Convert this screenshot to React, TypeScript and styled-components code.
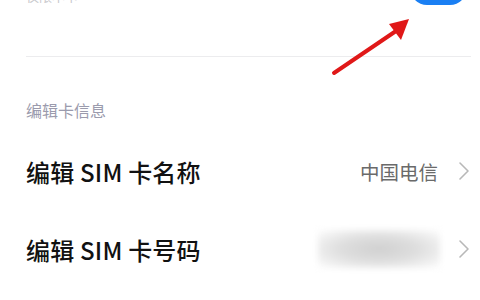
import React from "react";
import styled, { createGlobalStyle } from "styled-components";

const Global = createGlobalStyle`
  html, body { margin: 0; padding: 0; background: #ffffff; }
  body { font-family: "Noto Sans CJK SC", "Noto Sans", sans-serif; overflow: hidden; }
`;

const Page = styled.div`
  position: relative;
  width: 480px;
  height: 300px;
  overflow: hidden;
  background: #ffffff;
`;

const TopItem = styled.div`
  display: flex;
  align-items: flex-end;
  justify-content: space-between;
  margin-top: -40px;
  height: 45px;
  padding: 0 13px 0 26px;
`;

const FaintText = styled.span`
  font-size: 13px;
  line-height: 13px;
  color: #c8c8cc;
  margin-bottom: 3px;
`;

const BluePill = styled.div`
  width: 57px;
  height: 34px;
  border-radius: 17px;
  background: #1a7ff3;
`;

const Divider = styled.div`
  height: 1px;
  background: #ececee;
  margin: 51px 9px 0 26px;
`;

const SectionLabel = styled.div`
  padding: 43px 26px 12px 26px;
  font-size: 16px;
  line-height: 20px;
  color: #9b9bad;
`;

const Row = styled.div`
  display: flex;
  align-items: center;
  justify-content: space-between;
  height: 78px;
  padding: 0 10px 0 26px;
`;

const Title = styled.span`
  font-size: 24px;
  font-weight: 500;
  color: #111111;
  letter-spacing: 0.2px;
`;

const Right = styled.div`
  display: flex;
  align-items: center;
  gap: 20px;
`;

const Value = styled.span`
  font-size: 19.5px;
  color: #6a6a6a;
`;

const Blurred = styled.div`
  width: 122px;
  height: 38px;
  background: radial-gradient(ellipse at center, #d0d0d0 0%, #dedede 45%, #f2f2f2 80%, #ffffff 100%);
  filter: blur(3px);
  margin-right: -2px;
`;

const Chevron = styled.svg`
  width: 12px;
  height: 20px;
  flex: none;
`;

const Arrow = styled.svg`
  position: absolute;
  left: 0;
  top: 0;
  pointer-events: none;
`;

const ChevronIcon = () => (
  <Chevron viewBox="0 0 12 20">
    <path d="M2 2 L10 10 L2 18" fill="none" stroke="#b8b8b8" strokeWidth="1.6" strokeLinecap="round" strokeLinejoin="round" />
  </Chevron>
);

export default function App() {
  return (
    <Page>
      <Global />
      <TopItem>
        <FaintText>仅限本卡</FaintText>
        <BluePill />
      </TopItem>
      <Divider />
      <SectionLabel>编辑卡信息</SectionLabel>
      <Row>
        <Title>编辑 SIM 卡名称</Title>
        <Right>
          <Value>中国电信</Value>
          <ChevronIcon />
        </Right>
      </Row>
      <Row>
        <Title>编辑 SIM 卡号码</Title>
        <Right>
          <Blurred />
          <ChevronIcon />
        </Right>
      </Row>
      <Arrow width="480" height="300" viewBox="0 0 480 300">
        <line x1="334" y1="73" x2="396" y2="31" stroke="#e01818" strokeWidth="4" strokeLinecap="round" />
        <polygon points="409,19 389,24 401,40" fill="#e01818" />
      </Arrow>
    </Page>
  );
}
